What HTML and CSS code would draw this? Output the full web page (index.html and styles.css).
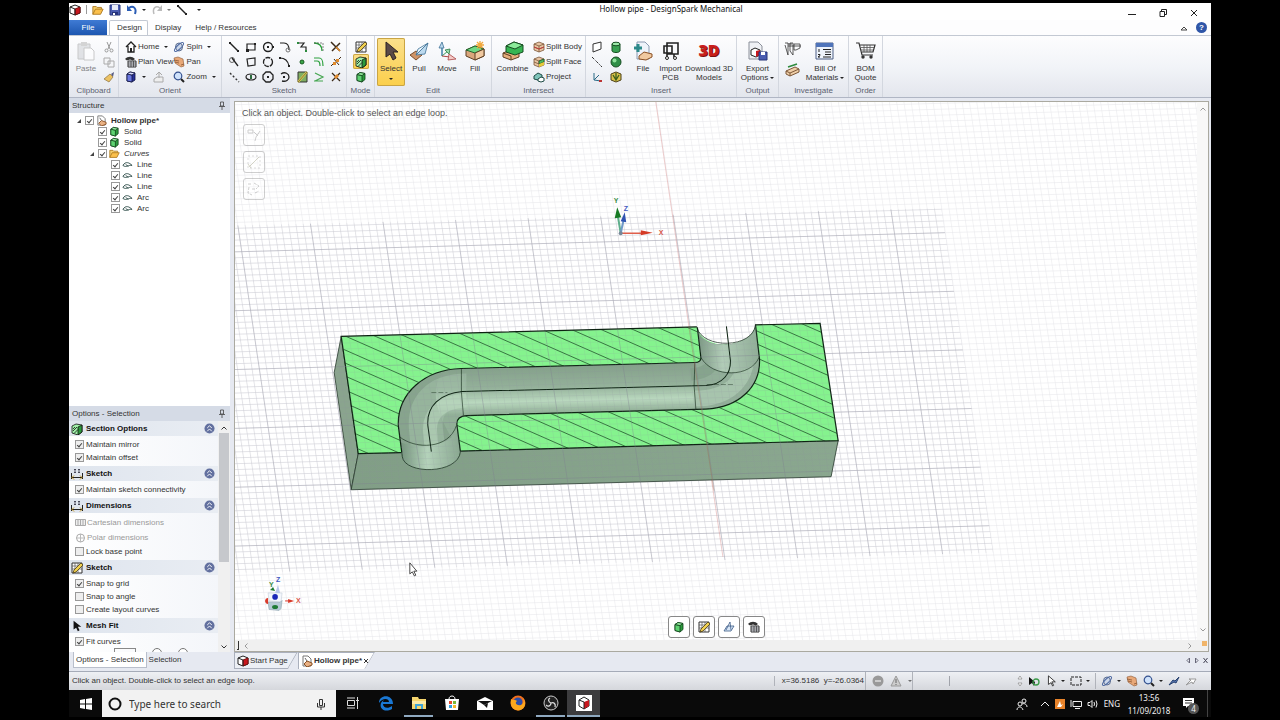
FILE: index.html
```html
<!DOCTYPE html>
<html lang="en">
<head>
    <meta charset="UTF-8">
    <meta name="viewport" content="width=device-width, initial-scale=1.0">
    <title>Hollow pipe - DesignSpark Mechanical</title>
    <link rel="stylesheet" href="styles.css">
</head>
<body>

<!-- shared icons -->
<svg class="sprite" aria-hidden="true">
    <symbol id="i-app" viewBox="0 0 12 12"><path d="M1 3l5-2 5 2v6l-5 2-5-2z" fill="#fff" stroke="#222"/><path d="M6 5l5-2v6l-5 2z" fill="#c8161d" stroke="#711"/><path d="M1 3l5 2v6" fill="none" stroke="#222"/></symbol>
    <symbol id="i-cube" viewBox="0 0 12 12"><path d="M2 3.500l3-2 5 1v6l-3 2.500-5-1.500z" fill="#2b9a3c" stroke="#0d3d16" stroke-width=".8"/><path d="M2 3.500l5 1V11l-5-1.500z" fill="#5fd272" stroke="#0d3d16" stroke-width=".8"/><path d="M2 3.500l3-2 5 1-3 2z" fill="#9af0a4" stroke="#0d3d16" stroke-width=".8"/></symbol>
    <symbol id="i-section" viewBox="0 0 12 12"><path d="M1 3l4-2 6 1v7l-4 3-6-2z" fill="#9ff0a8" stroke="#111" stroke-width=".8"/><path d="M7 4l4-2v7l-4 3z" fill="#2b9a3c" stroke="#111" stroke-width=".8"/><path d="M2 8l4-4M3 10.500l4-4M2 6l2-2" stroke="#111" stroke-width=".8" fill="none"/></symbol>
    <symbol id="i-bluecube" viewBox="0 0 12 12"><path d="M2 3l3-2 5 1v7l-3 2-5-1z" fill="#27309a" stroke="#10143f" stroke-width=".8"/><path d="M2 3l5 1v7l-5-1z" fill="#6a78e0" stroke="#10143f" stroke-width=".8"/><path d="M2 3l3-2 5 1-3 2z" fill="#d4d9fa" stroke="#10143f" stroke-width=".8"/></symbol>
    <symbol id="i-doc" viewBox="0 0 12 12"><path d="M2 1h5l3 3v7H2z" fill="#fff" stroke="#777"/><path d="M3 9l3-3 5 2v2l-5 2z" fill="#e9b184" stroke="#8a5024"/><path d="M4 3l2 3" stroke="#666"/></symbol>
    <symbol id="i-folder" viewBox="0 0 14 12"><path d="M1 11V2h4l1 1h5v2" fill="#f6cf6b" stroke="#a8741a"/><path d="M1 11l3-6h9l-3 6z" fill="#fbc04c" stroke="#a8741a"/></symbol>
    <symbol id="i-save" viewBox="0 0 12 12"><path d="M1 1h10v10H1z" fill="#4a5cb0" stroke="#27347a"/><path d="M3 1h6v5H3z" fill="#e6eaf7"/><path d="M3 8h6v3H3z" fill="#27347a"/><path d="M4 9h2v2H4z" fill="#fff"/></symbol>
    <symbol id="i-undo" viewBox="0 0 12 12"><path d="M3 4c4-3 8 0 6 6" fill="none" stroke="#2b5db5" stroke-width="2"/><path d="M1 1v6h5z" fill="#2b5db5"/></symbol>
    <symbol id="i-redo" viewBox="0 0 12 12"><path d="M9 4C5 1 1 4 3 10" fill="none" stroke="#bbb" stroke-width="1.500"/><path d="M11 1v6H6z" fill="#bbb"/></symbol>
    <symbol id="i-line" viewBox="0 0 12 12"><path d="M2 2l8 8" stroke="#222" stroke-width="1.400"/><path d="M1 1h2v2H1zM9 9h2v2H9z" fill="#222"/></symbol>
    <symbol id="i-curve" viewBox="0 0 12 8"><path d="M1 5c3-5 7-3 10 0-4-1-6 3-10 0M4 4l3 2" fill="none" stroke="#2b4a46"/></symbol>
    <symbol id="i-sketch" viewBox="0 0 12 12"><path d="M1 1h10v10H1z" fill="#fff" stroke="#333"/><path d="M1 4h10M1 7h10M4 1v10M7 1v10" stroke="#555" stroke-width=".7"/><path d="M2 11l1-3 7-7 2 2-7 7z" fill="#f0d050" stroke="#4a3b10" stroke-width=".8"/></symbol>
    <symbol id="i-plane" viewBox="0 0 12 12"><path d="M1 10l3-5h7l-3 5z" fill="#d8e6f6" stroke="#3b5b86" stroke-width=".8"/><path d="M3 9l4-8 1 8" fill="none" stroke="#3b5b86" stroke-width=".8"/></symbol>
    <symbol id="i-plan" viewBox="0 0 12 12"><path d="M0 3c3-3 7-3 10 0l-2 1.500-3-1-3 1z" fill="#333"/><path d="M3 5h8v6H3z" fill="#e6eaf2" stroke="#333"/><path d="M3 7h8M3 9h8M6 5v6M8.500 5v6" stroke="#333" stroke-width=".7"/></symbol>
    <symbol id="i-spin" viewBox="0 0 12 12"><ellipse cx="6" cy="6" rx="3.500" ry="4" fill="#cdd8ea" stroke="#5a6b8c"/><ellipse cx="6" cy="6" rx="6" ry="2" transform="rotate(-45 6 6)" fill="none" stroke="#4a66a0"/></symbol>
    <symbol id="i-pan" viewBox="0 0 12 12"><path d="M1 2l4-1 5 2 1 7-3 1-6-4z" fill="#e8a878" stroke="#8c5630" stroke-width=".6"/><path d="M1 4l5 1M2 6l4 1M8 9l3-1" stroke="#6d3c1c" stroke-width=".6"/></symbol>
    <symbol id="i-zoom" viewBox="0 0 12 12"><circle cx="5" cy="5" r="3.800" fill="#cfe2fb" stroke="#33508e" stroke-width="1.200"/><path d="M8 8l3 3" stroke="#222" stroke-width="2"/></symbol>
    <symbol id="i-dims" viewBox="0 0 12 12"><path d="M.5 5v6M11.500 5v6M1 9.500h10" stroke="#222"/><path d="M3 7.500L1 9.500l2 2M9 7.500l2 2-2 2" fill="none" stroke="#c09018"/><path d="M3 1.500h2M4 1v4M3 4.500h2M7 1.500h2M8 1v4M7 4.500h2" stroke="#334" stroke-width=".8"/></symbol>
    <symbol id="i-arrow" viewBox="0 0 12 14"><path d="M2 1v10l3-2 2 4 2-1-2-4h4z" fill="#111"/></symbol>
    <symbol id="i-pin" viewBox="0 0 8 10"><path d="M2.500 1h3v4h-3zM1 5.500h6M4 6v3" fill="none" stroke="#444" stroke-width=".8"/></symbol>
    <symbol id="i-up" viewBox="0 0 12 12"><circle cx="6" cy="6" r="5.500" fill="#62709f"/><path d="M3.500 5.500L6 3l2.500 2.500M3.500 9L6 6.500 8.500 9" fill="none" stroke="#fff"/></symbol>
    <symbol id="i-chev" viewBox="0 0 8 8"><path d="M1.500 5.500L4 3l2.500 2.500" fill="none" stroke="currentColor"/></symbol>
    <symbol id="i-hatch" viewBox="0 0 12 12"><path d="M6 1l5 2v6l-5 2-5-2V3z" fill="#e8c5a4" stroke="#7b5738" stroke-width=".8"/><path d="M1 3l5 2 5-2M6 5v6M1 6l5 2 5-2" fill="none" stroke="#7b5738" stroke-width=".8"/></symbol>
</svg>

<main class="app">

    <!-- title bar -->
    <header class="titlebar">
        <div class="quick">
            <svg class="ic"><use href="#i-app"/></svg>
            <span class="quick-sep"></span>
            <button aria-label="Open"><svg class="ic"><use href="#i-folder"/></svg></button>
            <button aria-label="Save"><svg class="ic"><use href="#i-save"/></svg></button>
            <button aria-label="Undo"><svg class="ic"><use href="#i-undo"/></svg><i class="caret"></i></button>
            <button aria-label="Redo"><svg class="ic"><use href="#i-redo"/></svg><i class="caret dim"></i></button>
            <button aria-label="Line"><svg class="ic"><use href="#i-line"/></svg></button>
            <button aria-label="Customize"><i class="caret top-line"></i></button>
        </div>
        <h1 class="title">Hollow pipe - DesignSpark Mechanical</h1>
        <div class="window-buttons">
            <button aria-label="Minimize"><svg width="8" height="8"><path d="M0 5.500h8" stroke="#222"/></svg></button>
            <button aria-label="Restore"><svg width="8" height="8"><path d="M1 2.500h4.500v5H1zM2.500 2V.5H7.500v5H6" fill="none" stroke="#222"/></svg></button>
            <button aria-label="Close"><svg width="8" height="8"><path d="M1 1l6 6M7 1L1 7" stroke="#222"/></svg></button>
        </div>
    </header>

    <nav class="tabs">
        <button class="tab file">File</button>
        <button class="tab active">Design</button>
        <button class="tab">Display</button>
        <button class="tab">Help / Resources</button>
        <div class="tabs-right">
            <svg width="8" height="6"><path d="M1 5l3-3 3 3z" fill="#fff" stroke="#444"/></svg>
            <button class="help" aria-label="Help">?</button>
        </div>
    </nav>

    <!-- ribbon -->
    <section class="ribbon">
        <div class="group g-clipboard">
            <div class="group-body">
                <button class="big dim"><svg width="20" height="20" viewBox="0 0 20 20"><path d="M2 3h12v15H2z" fill="#d2d4d8" stroke="#aaa"/><path d="M5 1h6v4H5z" fill="#bbb"/><path d="M8 7h7l3 3v9H8z" fill="#fff" stroke="#aaa"/></svg>Paste</button>
                <div class="rows">
                    <button aria-label="Cut"><svg class="ic" viewBox="0 0 12 12"><path d="M4 1l3 7M8 1L5 8" stroke="#999"/><circle cx="3.500" cy="9.500" r="1.500" fill="none" stroke="#999"/><circle cx="8.500" cy="9.500" r="1.500" fill="none" stroke="#999"/></svg></button>
                    <button aria-label="Copy"><svg class="ic" viewBox="0 0 12 12"><path d="M1 2h6v6H1zM5 5h6v6H5z" fill="#f4f5f7" stroke="#aaa"/></svg></button>
                    <button aria-label="Format"><svg class="ic" viewBox="0 0 12 12"><path d="M8 3l3-2-1 5z" fill="#555a80"/><path d="M1 8l6-5 3 3-4 5z" fill="#ecc263" stroke="#8b7140" stroke-width=".7"/></svg></button>
                </div>
            </div>
            <div class="group-name">Clipboard</div>
        </div>

        <div class="group g-orient">
            <div class="group-body">
                <div class="rows">
                    <button><svg class="ic" viewBox="0 0 12 12"><path d="M1 6l5-5 5 5M3 5v6h6V5" fill="#fff" stroke="#222" stroke-width="1.300"/><path d="M5 7h2v4H5z" fill="#222"/></svg>Home<i class="caret"></i></button>
                    <button><svg class="ic"><use href="#i-plan"/></svg>Plan View</button>
                    <button aria-label="View"><svg class="ic"><use href="#i-bluecube"/></svg><i class="caret"></i><svg class="ic gap" viewBox="0 0 12 12"><path d="M2 11h9V6H5L2 8zM4 4l3-3 3 3M7 2v5" fill="#eee" stroke="#aaa"/></svg></button>
                </div>
                <div class="rows">
                    <button><svg class="ic"><use href="#i-spin"/></svg>Spin<i class="caret"></i></button>
                    <button><svg class="ic"><use href="#i-pan"/></svg>Pan</button>
                    <button><svg class="ic"><use href="#i-zoom"/></svg>Zoom<i class="caret"></i></button>
                </div>
            </div>
            <div class="group-name">Orient</div>
        </div>

        <div class="group g-sketch">
            <div class="group-body tools">
                <button aria-label="Line"><svg class="ic"><use href="#i-line"/></svg></button>
                <button aria-label="Rectangle"><svg class="ic" viewBox="0 0 12 12"><path d="M2 3h8v6H2z" fill="none" stroke="#222" stroke-width="1.200"/><path d="M1 8h3v3H1zM9 2h2v2H9z" fill="#222"/></svg></button>
                <button aria-label="Circle"><svg class="ic" viewBox="0 0 12 12"><circle cx="6" cy="6" r="4.500" fill="none" stroke="#222" stroke-width="1.300"/><path d="M5 5h2v2H5zM10 5h2v2h-2z" fill="#222"/></svg></button>
                <button aria-label="Tangent arc"><svg class="ic" viewBox="0 0 12 12"><path d="M1 2h4c4 0 5 3 5 7" fill="none" stroke="#222" stroke-width="1.200"/><circle cx="9" cy="9" r="2" fill="none" stroke="#777"/></svg></button>
                <button aria-label="Spline"><svg class="ic" viewBox="0 0 12 12"><path d="M2 2h6L5 6h5v4" fill="none" stroke="#222" stroke-width="1.200"/><path d="M1 1h2v2H1zM9 9h2v2H9z" fill="#2b8a3c"/></svg></button>
                <button aria-label="Rounded corner"><svg class="ic" viewBox="0 0 12 12"><path d="M1 2c6 0 8 3 8 8" fill="none" stroke="#2ba03c" stroke-width="1.300"/><path d="M1 2h9v8" fill="none" stroke="#555" stroke-dasharray="2 1" stroke-width=".7"/></svg></button>
                <button aria-label="Trim"><svg class="ic" viewBox="0 0 12 12"><path d="M1 1l9 9M10 2L2 10" stroke="#3b2a18" stroke-width="1.500"/><path d="M6 6l4 4" stroke="#e08a2c" stroke-width="1.500"/></svg></button>

                <button aria-label="Tangent line"><svg class="ic" viewBox="0 0 12 12"><circle cx="4" cy="4" r="2.500" fill="none" stroke="#666"/><path d="M4 2l6 8" stroke="#222" stroke-width="1.300"/></svg></button>
                <button aria-label="Three point rectangle"><svg class="ic" viewBox="0 0 12 12"><path d="M2 3l8-1v7l-7 1z" fill="none" stroke="#222" stroke-width="1.200"/></svg></button>
                <button aria-label="Three point circle"><svg class="ic" viewBox="0 0 12 12"><circle cx="6" cy="6" r="4.500" fill="none" stroke="#222" stroke-width="1.300" stroke-dasharray="5 1"/></svg></button>
                <button aria-label="Three point arc"><svg class="ic" viewBox="0 0 12 12"><path d="M1 2c5 0 8 3 9 8" fill="none" stroke="#222" stroke-width="1.200"/><path d="M0 1h2v2H0zM9 9h2v2H9z" fill="#222"/></svg></button>
                <button aria-label="Point"><svg class="ic" viewBox="0 0 12 12"><circle cx="6" cy="6" r="2" fill="#3aa648" stroke="#17591f"/></svg></button>
                <button aria-label="Offset curve"><svg class="ic" viewBox="0 0 12 12"><path d="M1 2h5c3 0 4 2 4 8M1 5h3c2 0 3 1 3 5" fill="none" stroke="#2ba03c" stroke-width="1.200"/></svg></button>
                <button aria-label="Split curve"><svg class="ic" viewBox="0 0 12 12"><path d="M1 10l4-4M7 5l4-4M4 3l5 6" stroke="#3b2a18"/><path d="M3 6h3v3H3zM6 3h3v3H6z" fill="#e08a2c"/></svg></button>

                <button aria-label="Construction line"><svg class="ic" viewBox="0 0 12 12"><path d="M2 2l9 9" stroke="#333" stroke-width="1.400" stroke-dasharray="2 2"/></svg></button>
                <button aria-label="Ellipse"><svg class="ic" viewBox="0 0 12 12"><ellipse cx="6" cy="6" rx="5" ry="3" fill="none" stroke="#222" stroke-width="1.200"/><path d="M5 4h2v4H5z" fill="#2b6a3c"/></svg></button>
                <button aria-label="Polygon"><svg class="ic" viewBox="0 0 12 12"><path d="M4 1h4l3 3v4l-3 3H4L1 8V4z" fill="none" stroke="#222" stroke-width="1.300"/><path d="M5 5h2v2H5z" fill="#222"/></svg></button>
                <button aria-label="Sweep arc"><svg class="ic" viewBox="0 0 12 12"><path d="M2 3c4-3 8 0 8 3s-3 5-7 4" fill="none" stroke="#222" stroke-width="1.300"/><path d="M4 5h2v2H4z" fill="#222"/></svg></button>
                <button aria-label="Project to sketch"><svg class="ic" viewBox="0 0 12 12"><path d="M2 1h9v10H2z" fill="#7fae63" stroke="#333"/><path d="M2 11L11 1" stroke="#e9cf4c" stroke-width="2"/><path d="M2 11L11 1" stroke="#333" stroke-width=".6"/></svg></button>
                <button aria-label="Bend"><svg class="ic" viewBox="0 0 12 12"><path d="M2 2l8 4-8 4M1 10h9" fill="none" stroke="#45a650" stroke-width="1.200"/></svg></button>
                <button aria-label="Scale"><svg class="ic" viewBox="0 0 12 12"><path d="M2 2l8 8M10 2L2 10" stroke="#3b2a18" stroke-width="1.200"/><path d="M4 6l3-3 2 2-3 3z" fill="#e08a2c"/></svg></button>
            </div>
            <div class="group-name">Sketch</div>
        </div>

        <div class="group g-mode">
            <div class="group-body">
                <div class="rows">
                    <button aria-label="Sketch mode"><svg class="ic"><use href="#i-sketch"/></svg></button>
                    <button class="on" aria-label="Section mode"><svg class="ic"><use href="#i-section"/></svg></button>
                    <button aria-label="3D mode"><svg class="ic"><use href="#i-cube"/></svg></button>
                </div>
            </div>
            <div class="group-name">Mode</div>
        </div>

        <div class="group g-edit">
            <div class="group-body">
                <button class="big on"><svg width="20" height="20" viewBox="0 0 20 20"><path d="M5 1v15l4-3 3 6 3-2-3-6h5z" fill="#5a4a48" stroke="#2c2322"/></svg>Select<i class="caret"></i></button>
                <button class="big"><svg width="20" height="20" viewBox="0 0 20 20"><path d="M1 14l6-4 6 4-6 5z" fill="#cf9468" stroke="#7a4d2a"/><path d="M7 14L19 2l-3 11z" fill="#bcd9ee" stroke="#3f7196" stroke-width=".8"/><path d="M7 14L19 2 9 8z" fill="#e8f4fc" stroke="#3f7196" stroke-width=".8"/></svg>Pull</button>
                <button class="big"><svg width="20" height="20" viewBox="0 0 20 20"><path d="M5 15V4" stroke="#3f80a8" stroke-width="1.500"/><path d="M2 7l3-6 2 6z" fill="#bcd9ee" stroke="#3f7196" stroke-width=".8"/><path d="M5 15l6-5" stroke="#3a9a58"/><path d="M8 9l5-1-1 5z" fill="#9adcae" stroke="#2c7a44" stroke-width=".8"/><path d="M5 15l8 1" stroke="#a44"/><path d="M12 13l7 5-8 1z" fill="#f3c9c6" stroke="#a44" stroke-width=".8"/></svg>Move</button>
                <button class="big"><svg width="20" height="20" viewBox="0 0 20 20"><path d="M1 9l9-4 9 3v7l-9 4-9-4z" fill="#d9a67c" stroke="#5f4024"/><path d="M1 9l9-4 9 3-9 4z" fill="#6fd883" stroke="#22662f"/><path d="M10 12v7l9-4V8z" fill="#f0c9a0" stroke="#5f4024"/><path d="M15 0v8M11 4h8M12 1l6 6M18 1l-6 6" stroke="#f2a83c" stroke-width="1.300"/></svg>Fill</button>
            </div>
            <div class="group-name">Edit</div>
        </div>

        <div class="group g-intersect">
            <div class="group-body">
                <button class="big"><svg width="22" height="20" viewBox="0 0 22 20"><path d="M1 12l8-3 8 3v4l-8 3-8-3z" fill="#e6ae7c" stroke="#5f4024"/><path d="M1 12l8 3v4" fill="none" stroke="#5f4024"/><path d="M4 5l8-4 9 3v7l-8 3-9-3z" fill="#36b552" stroke="#174d22"/><path d="M4 5l8-4 9 3-8 4z" fill="#8beb9a" stroke="#174d22"/></svg>Combine</button>
                <div class="rows">
                    <button><svg class="ic" viewBox="0 0 12 12"><use href="#i-hatch"/><path d="M1 6l5 2 5-2" fill="none" stroke="#c03a3a"/></svg>Split Body</button>
                    <button><svg class="ic" viewBox="0 0 12 12"><use href="#i-hatch"/><path d="M6 5l5-2v3l-5 2z" fill="#4cb860" stroke="#134a1e" stroke-width=".7"/><path d="M6 8l5-2v3l-5 2z" fill="#e6cc38"/></svg>Split Face</button>
                    <button><svg class="ic" viewBox="0 0 12 12"><path d="M1 5l4-3 4 2v3L5 9 1 8z" fill="#7fc4ba" stroke="#1d4a44"/><path d="M5 8l3-2 3 1v3l-3 1-3-1z" fill="#fff" stroke="#1d4a44"/></svg>Project</button>
                </div>
            </div>
            <div class="group-name">Intersect</div>
        </div>

        <div class="group g-insert">
            <div class="group-body">
                <div class="rows">
                    <button aria-label="Plane"><svg class="ic" viewBox="0 0 12 12"><path d="M2 3l8-2v7l-8 3z" fill="#fff" stroke="#333"/></svg></button>
                    <button aria-label="Axis"><svg class="ic" viewBox="0 0 12 12"><path d="M1 1l10 10" stroke="#333" stroke-dasharray="3 1 1 1"/></svg></button>
                    <button aria-label="Origin"><svg class="ic" viewBox="0 0 12 12"><path d="M3 2v7l5-5M3 9l7 1" fill="none" stroke="#2a6a86"/><path d="M8 9h3v2H8z" fill="#b33"/></svg></button>
                </div>
                <div class="rows">
                    <button aria-label="Cylinder"><svg class="ic" viewBox="0 0 12 12"><path d="M2 3v7c1 2 7 2 8 0V3z" fill="#39a152" stroke="#174d22"/><ellipse cx="6" cy="3" rx="4" ry="1.800" fill="#9be8a8" stroke="#174d22"/></svg></button>
                    <button aria-label="Sphere"><svg class="ic" viewBox="0 0 12 12"><circle cx="6" cy="6" r="5" fill="#2f8f48" stroke="#174d22"/><circle cx="4.500" cy="4.500" r="2" fill="#8fe09c"/></svg></button>
                    <button aria-label="Shell"><svg class="ic" viewBox="0 0 12 12"><path d="M6 1l5 2v6l-5 2-5-2V3z" fill="#d9c14a" stroke="#4c4016"/><path d="M3 4l3 5 3-5M6 2v7" fill="none" stroke="#3b5f1c" stroke-width="1.300"/></svg></button>
                </div>
                <button class="big w-file"><svg width="20" height="20" viewBox="0 0 20 20"><path d="M4 1h8l4 4v13H4z" fill="#eef3fa" stroke="#8a99b0"/><path d="M5 3v8M1 7h8" stroke="#2c8a8a" stroke-width="3"/><path d="M6 15l5-4 8 2v3l-6 3-7-1z" fill="#f0c9a0" stroke="#8a5024"/></svg>File</button>
                <button class="big w-pcb"><svg width="20" height="20" viewBox="0 0 20 20"><path d="M6 2h11v11H6zM3 5h8v7H3zM6 12v4M13 13v3" fill="none" stroke="#222" stroke-width="1.600"/><circle cx="6" cy="17" r="1.500" fill="#fff" stroke="#222"/><circle cx="14" cy="17" r="1.500" fill="#fff" stroke="#222"/></svg>Import<br>PCB</button>
                <button class="big w-models"><span class="three-d">3D</span>Download 3D<br>Models</button>
            </div>
            <div class="group-name">Insert</div>
        </div>

        <div class="group g-output">
            <div class="group-body">
                <button class="big"><svg width="20" height="20" viewBox="0 0 20 20"><path d="M1 1h9l4 4v13H1z" fill="#eef0f4" stroke="#8a8f99"/><path d="M3 9l4-2 5 2v5l-4 2-5-2z" fill="#fff" stroke="#222"/><path d="M8 10l4-1v5l-4 2z" fill="#c8161d"/><path d="M11 11h8v8h-8z" fill="#4a5cb0" stroke="#27347a"/><path d="M13 11h4v3h-4z" fill="#fff"/></svg>Export<br><span>Options<i class="caret"></i></span></button>
            </div>
            <div class="group-name">Output</div>
        </div>

        <div class="group g-investigate">
            <div class="group-body">
                <div class="pair">
                    <button aria-label="Measure"><svg width="18" height="16" viewBox="0 0 18 16"><path d="M1 1h3v12L1 3M6 1h3v12L6 9zM4 4h13M10 2h6v4l-4 2h-2zM4 2h4" fill="none" stroke="#333" stroke-width=".8"/></svg></button>
                    <button aria-label="Mass"><svg width="16" height="14" viewBox="0 0 16 14"><path d="M2 8l9-4 4 2v3l-9 4-4-2z" fill="#f0cfa8" stroke="#7b5738"/><path d="M2 8l4 2 9-4M6 10v3" fill="none" stroke="#7b5738"/><path d="M4 4l9-3" stroke="#2b8a3c" stroke-width="1.500"/></svg></button>
                </div>
                <button class="big"><svg width="20" height="20" viewBox="0 0 20 20"><path d="M1 2h17v16H1z" fill="#eef3fa" stroke="#4c5f86"/><path d="M1 2h17v4H1z" fill="#4f74ba"/><path d="M8 8.500h8M10 11h6M10 13.500h6M8 16h8M4 8v3M3 13.500h2v1L3 16h2" fill="none" stroke="#222"/></svg>Bill Of<br><span>Materials<i class="caret"></i></span></button>
            </div>
            <div class="group-name">Investigate</div>
        </div>

        <div class="group g-order">
            <div class="group-body">
                <button class="big"><svg width="20" height="20" viewBox="0 0 20 20"><path d="M0 2h3l3 12h11M4 4h15l-2 7H6" fill="none" stroke="#333" stroke-width="1.200"/><path d="M5 6.500h13M5 9h12M8 4v7M11 4v7M14 4v7" stroke="#555" stroke-width=".8"/><circle cx="7" cy="16" r="1.700" fill="#333"/><circle cx="15" cy="16" r="1.700" fill="#333"/></svg>BOM<br>Quote</button>
            </div>
            <div class="group-name">Order</div>
        </div>
    </section>

    <div class="workspace">

        <!-- left side -->
        <aside class="side">
            <h2 class="panel-title">Structure<svg width="8" height="10"><use href="#i-pin"/></svg></h2>
            <ul class="tree">
                <li><label class="lv1"><i class="twisty"></i><input type="checkbox" checked><svg class="ic"><use href="#i-doc"/></svg><b>Hollow pipe*</b></label></li>
                <li><label class="lv2"><input type="checkbox" checked><svg class="ic"><use href="#i-cube"/></svg>Solid</label></li>
                <li><label class="lv2"><input type="checkbox" checked><svg class="ic"><use href="#i-cube"/></svg>Solid</label></li>
                <li><label class="lv2 parent"><i class="twisty"></i><input type="checkbox" checked><svg class="ic"><use href="#i-folder"/></svg><em>Curves</em></label></li>
                <li><label class="lv3"><input type="checkbox" checked><svg class="ic"><use href="#i-curve"/></svg>Line</label></li>
                <li><label class="lv3"><input type="checkbox" checked><svg class="ic"><use href="#i-curve"/></svg>Line</label></li>
                <li><label class="lv3"><input type="checkbox" checked><svg class="ic"><use href="#i-curve"/></svg>Line</label></li>
                <li><label class="lv3"><input type="checkbox" checked><svg class="ic"><use href="#i-curve"/></svg>Arc</label></li>
                <li><label class="lv3"><input type="checkbox" checked><svg class="ic"><use href="#i-curve"/></svg>Arc</label></li>
            </ul>

            <h2 class="panel-title">Options - Selection<svg width="8" height="10"><use href="#i-pin"/></svg></h2>
            <div class="options">
                <div class="options-list">
                    <h3><svg class="ic"><use href="#i-section"/></svg>Section Options<svg class="fold"><use href="#i-up"/></svg></h3>
                    <div class="opts">
                        <label><input type="checkbox" checked>Maintain mirror</label>
                        <label><input type="checkbox" checked>Maintain offset</label>
                    </div>
                    <h3><svg class="ic"><use href="#i-dims"/></svg>Sketch<svg class="fold"><use href="#i-up"/></svg></h3>
                    <div class="opts">
                        <label><input type="checkbox" checked>Maintain sketch connectivity</label>
                    </div>
                    <h3><svg class="ic"><use href="#i-dims"/></svg>Dimensions<svg class="fold"><use href="#i-up"/></svg></h3>
                    <div class="opts">
                        <button disabled><svg width="11" height="8"><path d="M.5.5h10v6H.5zM3 1v5M5.500 1v5M8 1v5" fill="#eee" stroke="#aaa"/></svg>Cartesian dimensions</button>
                        <button disabled><svg width="11" height="10"><circle cx="5.500" cy="5" r="4" fill="#fff" stroke="#aaa"/><path d="M1.500 5h8M5.500 1v8" stroke="#bbb"/></svg>Polar dimensions</button>
                        <label><input type="checkbox">Lock base point</label>
                    </div>
                    <h3><svg class="ic"><use href="#i-sketch"/></svg>Sketch<svg class="fold"><use href="#i-up"/></svg></h3>
                    <div class="opts">
                        <label><input type="checkbox" checked>Snap to grid</label>
                        <label><input type="checkbox">Snap to angle</label>
                        <label><input type="checkbox">Create layout curves</label>
                    </div>
                    <h3><svg class="ic"><use href="#i-arrow"/></svg>Mesh Fit<svg class="fold"><use href="#i-up"/></svg></h3>
                    <div class="opts">
                        <label><input type="checkbox" checked>Fit curves</label>
                        <div class="fit-row"><input type="text" aria-label="Tolerance"><input type="radio" name="fit" aria-label="Coarse"><input type="radio" name="fit" aria-label="Fine"></div>
                    </div>
                </div>
                <div class="scroll">
                    <svg width="8" height="8"><use href="#i-chev"/></svg>
                    <span class="thumb"></span>
                    <svg class="down" width="8" height="8"><use href="#i-chev"/></svg>
                </div>
            </div>
            <div class="side-tabs">
                <button class="active">Options - Selection</button>
                <button>Selection</button>
            </div>
        </aside>

        <!-- model view -->
        <section class="content">
            <div class="view">
                <div class="canvas">
                    <svg class="scene" viewBox="235 102 963 537" preserveAspectRatio="xMinYMin slice">
                        <defs>
                            <pattern id="fine" width="7.240" height="5.850" patternUnits="userSpaceOnUse" patternTransform="matrix(1 -.027 .15 1 386 247)"><path d="M0 .5h7.240M.5 0v5.850" stroke="#8a8a9c" stroke-width=".5" fill="none"/></pattern>
                            <pattern id="major" width="72.400" height="58.500" patternUnits="userSpaceOnUse" patternTransform="matrix(1 -.027 .15 1 386 247)"><path d="M0 .5h72.400M.5 0v58.500" stroke="#777788" stroke-width=".7" fill="none"/></pattern>
                            <linearGradient id="tube" gradientUnits="userSpaceOnUse" x1="560" y1="365" x2="561" y2="412">
                                <stop offset="0" stop-color="#84a08a"/>
                                <stop offset=".45" stop-color="#94b19a"/>
                                <stop offset=".75" stop-color="#b9d8be"/>
                                <stop offset="1" stop-color="#91af97"/>
                            </linearGradient>
                            <linearGradient id="front" x1="0" y1="0" x2="1" y2="0">
                                <stop offset="0" stop-color="#819e86"/>
                                <stop offset="1" stop-color="#8aa78f"/>
                            </linearGradient>
                            <linearGradient id="legL" gradientUnits="userSpaceOnUse" x1="398" y1="0" x2="462" y2="0">
                                <stop offset="0" stop-color="#6f8e77"/>
                                <stop offset=".45" stop-color="#b4d2ba"/>
                                <stop offset="1" stop-color="#87a58e"/>
                            </linearGradient>
                            <linearGradient id="legR" gradientUnits="userSpaceOnUse" x1="697" y1="0" x2="759" y2="0">
                                <stop offset="0" stop-color="#7b9783"/>
                                <stop offset=".4" stop-color="#b1ccb7"/>
                                <stop offset="1" stop-color="#8fac96"/>
                            </linearGradient>
                            <clipPath id="face"><path d="M341 336L696 326.500C702 352 752 348 754.500 324.500L819 323L837 440L358 453z"/></clipPath>
                            <clipPath id="channel"><path d="M461 368C425 369 397 392 398 425L402 456C404 474 458 474 460 451L456.500 424C456 418 460 415.500 466 415L705 408.500C738 407 760 386 758.500 358L754.500 324C752 348 702 352 696.500 329L700 357C700.500 360 698 362 694 362Z"/></clipPath>
                        </defs>
                        <rect x="0" y="0" width="1400" height="900" fill="#fff"/>
                        <rect x="0" y="0" width="1400" height="900" fill="url(#fine)" opacity=".22"/>
                        <path d="M200 226L940 208L992 552L200 573z" fill="url(#fine)" opacity=".28"/>
                        <path d="M200 226L940 208L992 552L200 573z" fill="url(#major)" opacity=".36"/>
                        <path d="M655 102L722 556" stroke="#d88a8a" stroke-width=".6" opacity=".7"/>

                        <path d="M341 336L334 372L351 489L358 453z" fill="#8aa48e" stroke="#26372a" stroke-width=".8"/>
                        <path d="M358 453L837 440L830 476L351 489z" fill="url(#front)" stroke="#26372a" stroke-width=".8"/>

                        <!-- cut face with section lines -->
                        <g clip-path="url(#face)">
                            <path d="M330 320h520v140H330z" fill="#85f38e"/>
                            <path d="M330 103l520 229M330 116l520 229M330 130l520 229M330 143l520 229M330 156l520 229M330 170l520 229M330 183l520 229M330 196l520 229M330 210l520 229M330 223l520 229M330 236l520 229M330 250l520 229M330 263l520 229M330 276l520 229M330 289l520 229M330 303l520 229M330 316l520 229M330 329l520 229M330 343l520 229M330 356l520 229M330 369l520 229M330 383l520 229M330 396l520 229M330 409l520 229M330 422l520 229M330 436l520 229" fill="none" stroke="#123f1c" stroke-width=".7"/>
                        </g>

                        <!-- pipe channel -->
                        <g clip-path="url(#channel)">
                            <rect x="390" y="320" width="380" height="160" fill="url(#tube)"/>
                            <path d="M390 360H461C430 372 424 400 460 450V480H390z" fill="#87a48d"/>
                            <path d="M431 480L426 432C422 404 438 390 466 390" fill="none" stroke="#a6c4ac" stroke-width="34" opacity=".5"/>
                            <path d="M434 480L430 434C427 412 442 401 466 400" fill="none" stroke="#bddcc2" stroke-width="14" opacity=".5"/>
                            <path d="M390 438C415 450 448 449 462 425V480H390z" fill="url(#legL)"/>
                            <path d="M694 320H770V420H694z" fill="#92af99"/>
                            <path d="M694 398C726 398 746 382 746 350" fill="none" stroke="#b6d2bb" stroke-width="16" opacity=".6"/>
                            <path d="M690 374C712 372 716 362 714 340" fill="none" stroke="#7f9c86" stroke-width="12" opacity=".6"/>
                            <path d="M697 320H770L758 357C750 375 712 378 700 357z" fill="url(#legR)"/>
                        </g>
                        <g fill="none" stroke="#0c2211">
                            <path d="M461 368C425 369 397 392 398 425L401.500 452M460 451L456.500 424C456 418 460 415.500 466 415L705 408.500C738 407 760 386 758.500 358L754.500 324M696.500 327L700 357C700.500 360 698 362 694 362L461 368" stroke-width="1.200"/>
                            <path d="M401.500 452L402 456C404 474 458 474 460 451M696 327C702 349 752 348 754.500 324.500" stroke-width=".7"/>
                            <path d="M401 452L358 453L341 336L696 326.500M460 450.500L837 440L819 323L754.500 324.500" stroke-width="1.200"/>
                            <path d="M431 451L427.500 425C426 405 440 393 462 391L705 385C722 384 730 373 729.500 360L725.500 326" stroke-width="1"/>
                            <path d="M461 368Q460 392 463 415M399 436C415 449 448 449 456 425M694 362Q692 385 695 408.500M700 357C712 378 750 377 758 357" stroke-width=".6"/>
                            <path d="M431 392h16M706 384h28" stroke-width=".4" stroke-dasharray="5 2"/>
                        </g>
                        <path d="M341 336L334 372L351 489L830 476L837 440L819 323L754 324C750 348 702 352 696 327z" fill="url(#fine)" opacity=".25"/>
                        <path d="M341 336L334 372L351 489L830 476L837 440L819 323L754 324C750 348 702 352 696 327z" fill="url(#major)" opacity=".35"/>
                        <path d="M688 326L713 490" stroke="#a06a50" stroke-width=".6" opacity=".6"/>

                        <!-- origin triad -->
                        <g>
                            <path d="M620 233h22" stroke="#e0604c" stroke-width="1.500"/><path d="M640 230l12 2.500-12 2.500z" fill="#d43b26"/>
                            <path d="M620 233l-3-18" stroke="#5fae8c" stroke-width="2"/><path d="M614 218l2.500-11 4 10z" fill="#167a24"/>
                            <path d="M620 233l3-14" stroke="#6f9ac8" stroke-width="2"/><path d="M620 221l4-9 1.500 10z" fill="#2e52b0"/>
                            <circle cx="620" cy="233" r="2" fill="#789"/>
                            <text x="613" y="203" class="axis ax-y">Y</text>
                            <text x="623" y="211" class="axis ax-z">Z</text>
                            <text x="658" y="235" class="axis ax-x">X</text>
                        </g>
                        <!-- view cube -->
                        <g>
                            <path d="M268 592h14l-1 9-12-1z" fill="#f4f7fc" stroke="#c4ccd8" stroke-width=".6"/>
                            <path d="M268 601l12 .5 2-2-1 8-2 2-10-1z" fill="#b6cad4" stroke="#8fa4b0" stroke-width=".6"/>
                            <circle cx="275" cy="596" r="2.800" fill="#1a27b8"/><ellipse cx="275" cy="606" rx="3" ry="2" fill="#1f7a34"/>
                            <path d="M268 597c-4 0-4 6 0 6z" fill="#d93a2a"/>
                            <path d="M275 592l3-8 2 8z" fill="#b9c8ea"/><path d="M270 589l3-3 2 4z" fill="#1f7a34"/>
                            <path d="M285 600h4" stroke="#d93a2a"/><path d="M288 598l6 2-6 2z" fill="#d93a2a"/>
                            <text x="269" y="586" class="axis ax-y">Y</text>
                            <text x="276" y="581" class="axis ax-z">Z</text>
                            <text x="296" y="602" class="axis ax-x">X</text>
                        </g>
                        <!-- mouse cursor -->
                        <path d="M409.500 562v11l2.500-2 2 4 1.500-.7-2-4h3z" fill="#fff" stroke="#222" stroke-width=".8"/>
                    </svg>

                    <div class="hint">
                        <p>Click an object. Double-click to select an edge loop.</p>
                        <button aria-label="Select body"><svg width="16" height="16"><path d="M2 3h5v3H2zM8 5l4 4M14 4l-4 6-1 4" fill="none" stroke="#888"/></svg></button>
                        <button aria-label="Select edge"><svg width="16" height="16"><path d="M2 2h12v12H2z" fill="none" stroke="#aaa" stroke-dasharray="2 2"/><path d="M3 13L13 3M2 10l3 4" stroke="#997"/></svg></button>
                        <button aria-label="Select loop"><svg width="16" height="16"><path d="M2 3h3M8 2l5 3-3 3M3 6l-1 6 4 2M9 12l4-2M6 8h3" fill="none" stroke="#888" stroke-dasharray="3 1"/></svg></button>
                    </div>

                    <div class="mini-bar">
                        <button aria-label="Solid"><svg class="ic"><use href="#i-cube"/></svg></button>
                        <button aria-label="Sketch"><svg class="ic"><use href="#i-sketch"/></svg></button>
                        <button aria-label="Plane"><svg class="ic"><use href="#i-plane"/></svg></button>
                        <button aria-label="Plan view"><svg class="ic"><use href="#i-plan"/></svg></button>
                    </div>
                </div>
                <div class="vscroll">
                    <svg width="8" height="8"><use href="#i-chev"/></svg>
                    <svg class="down" width="8" height="8"><use href="#i-chev"/></svg>
                </div>
                <div class="hscroll">
                    <span class="split"></span>
                    <svg class="left" width="8" height="8"><use href="#i-chev"/></svg>
                    <svg class="right" width="8" height="8"><use href="#i-chev"/></svg>
                </div>
                <div class="corner"></div>
            </div>
            <div class="doc-tabs">
                <button class="doc"><svg class="ic"><use href="#i-app"/></svg>Start Page</button>
                <button class="doc active"><svg class="ic"><use href="#i-doc"/></svg><b>Hollow pipe*</b><svg width="6" height="6"><path d="M1 1l4 4M5 1L1 5" stroke="#333"/></svg></button>
                <div class="doc-nav">
                    <svg width="24" height="8"><path d="M4.500 1v5L2 3.500zM10.500 1v5L13 3.500z" fill="none" stroke="#667"/><path d="M18.500 1l4 5M22.500 1l-4 5" stroke="#445"/></svg>
                </div>
            </div>
        </section>
    </div>

    <!-- status bar -->
    <footer class="status">
        <span>Click an object. Double-click to select an edge loop.</span>
        <div class="status-mid">
            <span class="coords">x=36.5186&nbsp; y=-26.0364</span>
            <div class="status-warn">
                <svg class="ic" viewBox="0 0 12 12"><circle cx="6" cy="6" r="5.500" fill="#999"/><path d="M3 6h6" stroke="#ccc" stroke-width="2"/></svg>
                <svg class="ic" viewBox="0 0 12 12"><path d="M6 1l5 10H1z" fill="#ccc" stroke="#999"/><path d="M6 4v4M6 9v1" stroke="#666"/></svg>
                <i class="caret dim"></i>
            </div>
            <div class="status-gap"></div>
        </div>
        <div class="status-tools">
            <svg width="6" height="12"><path d="M1 4l2-3 2 3zM1 8l2 3 2-3z" fill="#fff" stroke="#888" stroke-width=".7"/></svg>
            <button aria-label="Revert"><svg class="ic" viewBox="0 0 12 12"><path d="M1 2v8l3-2 2 3 1-4z" fill="#111"/><circle cx="8" cy="7" r="3" fill="none" stroke="#3a9a48" stroke-width="1.300"/></svg></button>
            <button aria-label="Pick"><svg class="ic" viewBox="0 0 12 14"><path d="M3 1v10l3-2 2 4 1-1-2-4h4z" fill="#fff" stroke="#222"/></svg><i class="caret"></i></button>
            <button aria-label="Box select"><svg class="ic" viewBox="0 0 12 12"><path d="M1 2h10v8H1z" fill="none" stroke="#222" stroke-dasharray="3 1"/></svg><i class="caret"></i></button>
            <span class="bar"></span>
            <button aria-label="Spin"><svg class="ic"><use href="#i-spin"/></svg><i class="caret"></i></button>
            <button aria-label="Pan"><svg class="ic"><use href="#i-pan"/></svg></button>
            <button aria-label="Zoom"><svg class="ic"><use href="#i-zoom"/></svg><i class="caret"></i></button>
            <button aria-label="Previous view"><svg class="ic" viewBox="0 0 12 12"><path d="M1 10l4-5 2 1 4-4-3 6-2-1z" fill="#5a79b5" stroke="#26406e"/></svg></button>
            <button aria-label="Next view"><svg class="ic" viewBox="0 0 12 12"><path d="M1 10l5-5-2-1h7L8 9 7 7z" fill="#fff" stroke="#999"/></svg></button>
        </div>
    </footer>

    <!-- taskbar -->
    <div class="taskbar">
        <button class="start" aria-label="Start"><svg width="12" height="12"><path d="M0 2l5-1v4.500H0zM6 1l6-1v5.500H6zM0 6.500h5V11l-5-1zM6 6.500h6V12l-6-1z" fill="#fff"/></svg></button>
        <div class="search">
            <svg width="14" height="14"><circle cx="7" cy="7" r="5.500" fill="none" stroke="#111" stroke-width="2"/></svg>
            <input type="text" placeholder="Type here to search" aria-label="Search">
            <svg width="10" height="12"><path d="M3.500 1.500h3v6h-3zM1.500 5v4h7V5M5 9v3" fill="none" stroke="#333"/></svg>
        </div>
        <button class="task" aria-label="Task view"><svg width="12" height="12"><path d="M.5 3.500h7v5h-7zM0 1h8M0 11h8M10.500 0v12M9 3.500h3" fill="none" stroke="#ddd"/></svg></button>
        <button class="task" aria-label="Edge"><svg width="16" height="16"><path d="M1 8C1 -1 15 -1 15 9H5c0 4 5 5 9 2v3C7 18 1 14 3 8c1-2 3-3 3-3-1 1-1 2-1 2h6c0-4-7-4-10 1z" fill="#1a78d4"/></svg></button>
        <button class="task running" aria-label="Explorer"><svg width="16" height="14"><path d="M1 1h6l1 2h7v10H1z" fill="#f6d66e"/><path d="M1 5h14v3H1z" fill="#fbeaa8"/><path d="M4 8h8v5h-2v-3H6v3H4z" fill="#41a5d8"/></svg></button>
        <button class="task" aria-label="Store"><svg width="16" height="16"><path d="M5 4c0-4 6-4 6 0" fill="none" stroke="#fff"/><path d="M1 4h14l-1 11H2z" fill="#fff"/><path d="M5 6h3v3H5z" fill="#e64a2e"/><path d="M9 6h3v3H9z" fill="#7aba3a"/><path d="M5 10h3v3H5z" fill="#2f9fe0"/><path d="M9 10h3v3H9z" fill="#f5b82e"/></svg></button>
        <button class="task" aria-label="Mail"><svg width="18" height="14"><path d="M1 5l8-4 8 4v9H1z" fill="#fff"/><path d="M2 5h14L8 9z" fill="#111"/><path d="M8 9l3 3 1-5z" fill="#111"/></svg></button>
        <button class="task" aria-label="Firefox"><svg width="16" height="16"><circle cx="8" cy="8" r="7.500" fill="#f0701e"/><circle cx="8" cy="7" r="4.500" fill="#2c4ea8"/><path d="M1 4c3 2 4 0 6 2-3 2 0 5 4 4 3-1 3-5 2-7 4 5 2 12-5 12.500C2 15 0 10 1 4z" fill="#fba81c"/></svg></button>
        <button class="task running" aria-label="Recorder"><svg width="16" height="16"><circle cx="8" cy="8" r="7" fill="#222" stroke="#ccc"/><path d="M8 8c-3-1-3-4-1-5M8 8c3-1 5 1 4 4M8 8c0 3-3 4-5 2" fill="none" stroke="#ddd" stroke-width="1.300"/></svg></button>
        <button class="task running current" aria-label="DesignSpark Mechanical"><svg width="16" height="16" viewBox="0 0 16 16"><path d="M0 0h16v16H0z" fill="#fff"/><path d="M3 5l5-3 5 3v6l-5 3-5-3z" fill="#fff" stroke="#222"/><path d="M8 7l5-2v6l-5 3z" fill="#c8161d"/><path d="M3 5l5 2v7" fill="none" stroke="#222"/></svg></button>
        <div class="tray">
            <svg width="12" height="12"><circle cx="4" cy="6" r="2" fill="none" stroke="#eee"/><circle cx="8" cy="3" r="2" fill="none" stroke="#eee"/><path d="M1 12c0-4 5-4 6 0M6 6c2-1 5 0 5 3" fill="none" stroke="#eee"/></svg>
            <svg class="tray-up" width="10" height="8"><path d="M1 6l4-4 4 4" fill="none" stroke="#eee"/></svg>
            <svg width="10" height="10"><path d="M0 0h10v10H0z" fill="#e8832a"/><path d="M2 8l3-6 1 4 2-1-2 3z" fill="#fff"/></svg>
            <svg width="12" height="10"><path d="M3 2.500h8.500v5H3zM5 9.500h5M1 1v7" fill="none" stroke="#eee"/></svg>
            <svg width="12" height="10"><path d="M1 3.500h2l2-2v7l-2-2H1zM7 3q1 2 0 4M9 1.500q2 3.500 0 7" fill="none" stroke="#eee"/></svg>
            <span class="lang">ENG</span>
            <span class="clock">13:56<br>11/09/2018</span>
            <button class="note" aria-label="Notifications"><svg width="16" height="16"><path d="M1 2h11v8H6l-2 2v-2H1z" fill="#fff"/><path d="M3 4.500h7M3 7h7" stroke="#333"/></svg><span>4</span></button>
        </div>
    </div>
</main>

</body>
</html>
```
FILE: styles.css
```css
* {
    margin: 0;
    padding: 0;
    box-sizing: border-box;
}

body {
    display: flex;
    height: 100vh;
    padding: 3px 69px;
    background-color: #000;
    color: #333;
    font-family: "Liberation Sans", Arial, sans-serif;
    font-size: 8px;
    line-height: 10px;
}

button,
input {
    font: inherit;
    color: inherit;
    background: none;
    border: none;
}

svg {
    display: block;
    flex: none;
}

.sprite {
    position: absolute;
    width: 0;
    height: 0;
}

.ic {
    width: 12px;
    height: 12px;
}

.caret {
    display: inline-block;
    flex: none;
    border: 2px solid transparent;
    border-top-color: #222;
    border-bottom: 0;
    margin-left: 4px;
}

.dim {
    opacity: 0.6;
}

.app {
    flex: 1;
    min-width: 0;
    display: flex;
    flex-direction: column;
    background-color: #fff;
}

/* Title bar */
.titlebar {
    display: flex;
    height: 17px;
}

.quick {
    flex: none;
    display: flex;
    align-items: center;
    gap: 5px;
    width: 145px;
    padding-bottom: 4px;
}

.quick button {
    display: flex;
    align-items: center;
}

.quick-sep {
    width: 1px;
    height: 9px;
    background-color: #999;
}

.quick .top-line {
    margin-left: 4px;
    box-shadow: 0 -4px 0 -1px #666;
}

.title {
    flex: 1;
    padding-top: 1px;
    color: #111;
    font-family: "Noto Sans", sans-serif;
    font-size: 8px;
    font-weight: 400;
    text-align: center;
}

.window-buttons {
    display: flex;
    justify-content: flex-end;
    gap: 23px;
    padding: 6px 13px 0 0;
}

.window-buttons button {
    height: 8px;
}

/* Tabs */
.tabs {
    display: flex;
    height: 15px;
    background-color: #fdfdfe;
}

.tab {
    padding: 0 7px;
}

.tab.file {
    width: 38px;
    margin-right: 2px;
    background: linear-gradient(#3f7bd4, #1d56b0);
    color: #fff;
}

.tab.active {
    width: 39px;
    background-color: #fff;
    border: 1px solid #c3c9d3;
    border-bottom: 0;
    border-radius: 2px 2px 0 0;
}

.tabs-right {
    display: flex;
    align-items: center;
    gap: 8px;
    margin-left: auto;
    padding-right: 4px;
}

.help {
    width: 11px;
    height: 11px;
    border-radius: 50%;
    background-color: #2f56a8;
    color: #fff;
    font-weight: 700;
    line-height: 11px;
}

/* Ribbon */
.ribbon {
    display: flex;
    height: 63px;
    border-top: 1px solid #c3c9d3;
    border-bottom: 1px solid #b0b6c4;
    background: linear-gradient(#fdfdfe, #f2f4f8 50%, #e3e6ed);
}

.group {
    display: flex;
    flex-direction: column;
    flex: none;
    border-right: 1px solid #d3d7df;
}

.group-body {
    flex: 1;
    display: flex;
    min-height: 0;
    padding-top: 2px;
}

.group-name {
    flex: none;
    height: 11px;
    color: #5c6270;
    text-align: center;
    white-space: nowrap;
}

.g-clipboard { width: 50px; }
.g-orient { width: 103px; }
.g-sketch { width: 125px; }
.g-mode { width: 28px; }
.g-edit { width: 117px; }
.g-intersect { width: 94px; }
.g-insert { width: 151px; }
.g-output { width: 42px; }
.g-investigate { width: 70px; }
.g-order { width: 34px; }

.big {
    display: flex;
    flex-direction: column;
    align-items: center;
    width: 28px;
    height: 48px;
    padding-top: 3px;
    line-height: 9px;
    white-space: nowrap;
}

.big svg,
.three-d {
    margin-bottom: 3px;
}

.big > .caret {
    margin: 5px 0 0;
}

.big span .caret {
    margin-left: 2px;
    vertical-align: middle;
}

.on {
    background: linear-gradient(#fbe08c, #fbcf4b);
    box-shadow: inset 0 0 0 1px #c9a443;
    border-radius: 2px;
}

.rows {
    padding-top: 1px;
}

.rows button {
    display: flex;
    align-items: center;
    height: 15px;
    white-space: nowrap;
}

.rows .gap {
    margin-left: 5px;
}

.g-clipboard .big {
    width: 34px;
}

.g-orient .group-body {
    padding-left: 6px;
}

.g-orient .rows {
    width: 52px;
}

.g-orient .rows button {
    gap: 1px;
}

.tools {
    display: grid;
    grid-template-columns: repeat(7, 17px);
    grid-auto-rows: 15px;
    padding: 3px 0 0 3px;
}

.tools button {
    display: grid;
    place-items: center;
}

.g-mode .group-body {
    justify-content: center;
}

.g-mode button {
    width: 16px;
    justify-content: center;
}

.g-edit .group-body {
    padding-left: 2px;
}

.g-intersect .big {
    width: 41px;
}

.g-intersect .ic {
    margin-right: 1px;
}

.g-insert .rows {
    width: 19px;
    margin-left: 5px;
}

.g-insert .rows + .rows {
    margin-left: 0;
}

.w-pcb {
    width: 27px;
}

.w-models {
    width: 50px;
}

.three-d {
    height: 20px;
    color: #c8201c;
    font-family: "Open Sans", sans-serif;
    font-size: 16px;
    font-weight: 800;
    line-height: 18px;
    text-shadow: 1px 1px 0 #7c1210;
}

.g-output .big {
    width: 41px;
}

.pair {
    display: grid;
    gap: 5px;
    align-content: start;
    padding: 4px 0 0 5px;
}

.g-investigate .big {
    width: 46px;
}

.g-order .big {
    width: 33px;
}

/* Workspace */
.workspace {
    flex: 1;
    min-height: 0;
    display: flex;
    gap: 4px;
    background-color: #e6e9f1;
}

.side {
    flex: none;
    width: 161px;
    display: flex;
    flex-direction: column;
}

.panel-title {
    display: flex;
    align-items: center;
    justify-content: space-between;
    flex: none;
    height: 15px;
    padding: 1px 4px 0 3px;
    background-color: #d5dbe6;
    font-size: 8px;
    font-weight: 400;
}

.tree {
    flex: 1;
    padding-top: 2px;
    background-color: #fff;
    list-style: none;
}

.tree label {
    display: flex;
    align-items: center;
    height: 11px;
}

.tree .ic {
    width: 11px;
    height: 11px;
    margin: 0 4px 0 2px;
}

.tree .lv1 { padding-left: 8px; }
.tree .lv2 { padding-left: 29px; }
.tree .lv2.parent { padding-left: 21px; }
.tree .lv3 { padding-left: 42px; }

.twisty {
    width: 0;
    height: 0;
    margin-right: 4px;
    border: 2px solid transparent;
    border-right-color: #444;
    border-bottom-color: #444;
}

input[type="checkbox"] {
    appearance: none;
    flex: none;
    display: grid;
    place-items: center;
    width: 9px;
    height: 9px;
    border: 1px solid #999;
    background-color: #fff;
}

input[type="checkbox"]:checked::after {
    content: "";
    width: 2px;
    height: 4px;
    margin-top: -1px;
    border: solid #444;
    border-width: 0 1px 1px 0;
    box-sizing: content-box;
    transform: rotate(40deg);
}

.options {
    flex: none;
    display: flex;
    height: 231px;
    background-color: #fff;
}

.options-list {
    flex: 1;
    overflow: hidden;
}

.options h3 {
    display: flex;
    align-items: center;
    height: 15px;
    padding: 0 3px 0 2px;
    background: linear-gradient(90deg, #dfe5ee, #e9edf3);
    color: #111;
    font-size: 8px;
}

.options h3 .ic {
    margin-right: 3px;
}

.fold {
    width: 11px;
    height: 11px;
    margin-left: auto;
}

.opts {
    padding: 2px 0 2px 6px;
    background: linear-gradient(90deg, #fff, #f4f6fa);
}

.opts label,
.opts button {
    display: flex;
    align-items: center;
    height: 13px;
    gap: 2px;
}

.opts button {
    height: 15px;
    gap: 1px;
    color: #999;
}

.opts input[type="checkbox"] {
    background-color: #eee;
}

.fit-row {
    display: flex;
    gap: 16px;
    padding-left: 39px;
}

.fit-row input[type="text"] {
    width: 22px;
    height: 12px;
    border: 1px solid #888;
}

.fit-row input[type="radio"] {
    width: 10px;
    height: 10px;
}

.scroll {
    display: flex;
    flex-direction: column;
    align-items: center;
    width: 12px;
    padding: 3px 0 1px;
    background-color: #f0f0f0;
}

.thumb {
    flex: 0 0 129px;
    width: 10px;
    margin-top: 1px;
    background-color: #c6c8cc;
}

.down {
    margin-top: auto;
    transform: rotate(180deg);
}

.side-tabs {
    flex: none;
    display: flex;
    height: 19px;
    padding: 0 4px 3px;
}

.side-tabs button {
    padding: 0 2px;
    white-space: nowrap;
}

.side-tabs .active {
    border: 1px solid #b9bfcc;
    border-top: 0;
    background-color: #fff;
}

/* Model view */
.content {
    flex: 1;
    min-width: 0;
    display: flex;
    flex-direction: column;
    padding-top: 3px;
}

.view {
    flex: 1;
    min-height: 0;
    display: grid;
    grid-template-columns: 1fr 11px;
    grid-template-rows: 1fr 11px;
    margin-right: 2px;
    border: 1px solid #aaa9a0;
    background-color: #f0f0f0;
}

.canvas {
    position: relative;
    min-height: 0;
    overflow: hidden;
    background-color: #fff;
}

.scene {
    position: absolute;
    width: 100%;
    height: 100%;
}

.axis {
    font-size: 7px;
    font-weight: 700;
}

.ax-x { fill: #d8574a; }
.ax-y { fill: #3a8c48; }
.ax-z { fill: #4258c0; }

.hint {
    position: absolute;
    top: 5px;
    left: 7px;
}

.hint p {
    margin-bottom: 5px;
    color: #555;
    font-size: 9px;
    line-height: 12px;
}

.hint button,
.mini-bar button {
    display: grid;
    place-items: center;
    width: 22px;
    height: 22px;
    border: 1px solid #888;
    border-radius: 3px;
    background-color: #fff;
}

.hint button {
    margin: 0 0 5px 1px;
    opacity: 0.4;
}

.mini-bar {
    position: absolute;
    bottom: 2px;
    left: 45%;
    display: flex;
    gap: 3px;
}

.vscroll,
.hscroll {
    display: flex;
    align-items: center;
    color: #999;
}

.vscroll {
    flex-direction: column;
    padding: 3px 0 6px;
    background-color: #f8f8f8;
}

.hscroll {
    padding: 0 3px 0 2px;
}

.split {
    width: 2px;
    height: 9px;
    margin-right: 3px;
    border-right: 1px solid #333;
    border-bottom: 1px solid #333;
}

.left {
    transform: rotate(-90deg);
}

.right {
    margin-left: auto;
    transform: rotate(90deg);
}

.corner {
    width: 5px;
    height: 5px;
    margin: 1px 0 0 5px;
    background-color: #f0b469;
}

.doc-tabs {
    display: flex;
    height: 19px;
    padding-bottom: 2px;
}

.doc {
    position: relative;
    display: flex;
    align-items: center;
    gap: 1px;
    width: 64px;
    padding-left: 2px;
    border: 1px solid #aab0bd;
    border-width: 1px 0 1px 1px;
    clip-path: polygon(0 0, 100% 0, calc(100% - 10px) 100%, 0 100%);
    background-color: #eceff5;
    white-space: nowrap;
}

.doc.active {
    width: 77px;
    border-bottom: 0;
    background-color: #fff;
}

/* slanted edge of the tab */
.doc::after {
    content: "";
    position: absolute;
    top: 0;
    right: 5px;
    width: 1px;
    height: 100%;
    background-color: #aab0bd;
    transform: skewX(-30deg);
}

.doc-nav {
    margin-left: auto;
    padding: 5px 2px 0 0;
}

/* Status bar */
.status {
    flex: none;
    display: flex;
    align-items: center;
    height: 19px;
    padding: 0 14px 0 3px;
    border-top: 1px solid #a5abb8;
    background: linear-gradient(#eef0f4, #d5d7dc);
}

.status-mid {
    display: flex;
    align-items: center;
    margin-left: auto;
}

.coords {
    width: 91px;
    padding-right: 1px;
    border-left: 1px solid #b0b3ba;
    text-align: right;
    white-space: nowrap;
}

.status-warn {
    display: flex;
    align-items: center;
    gap: 6px;
    width: 48px;
    height: 18px;
    padding-left: 6px;
    border: solid #b0b3ba;
    border-width: 0 1px;
}

.status-warn .caret {
    margin: 0;
}

.status-gap {
    width: 37px;
    height: 10px;
    border-right: 1px solid #a0a3aa;
}

.status-tools {
    display: flex;
    align-items: center;
    gap: 5px;
    margin-left: 67px;
}

.status-tools button {
    display: flex;
    align-items: center;
}

.bar {
    width: 1px;
    height: 16px;
    background-color: #b0b3ba;
}

/* Taskbar */
.taskbar {
    flex: none;
    display: flex;
    height: 27px;
    background-color: #0a0a0a;
    color: #f2f2f2;
    font-family: "Noto Sans", sans-serif;
}

.start {
    display: grid;
    place-items: center;
    width: 33px;
}

.search {
    display: flex;
    align-items: center;
    width: 234px;
    padding: 0 10px 0 6px;
    background-color: #f2f2f2;
}

.search input {
    flex: 1;
    min-width: 0;
    padding-left: 7px;
    font-size: 10px;
}

.search input::placeholder {
    color: #333;
}

.task {
    display: grid;
    place-items: center;
    width: 33px;
    border-bottom: 2px solid transparent;
}

.task.running {
    width: 29px;
    margin: 0 2px;
    border-bottom-color: #8fa9c0;
}

.task.current {
    width: 33px;
    margin: 0;
    background-color: #3c3c3e;
}

.tray {
    display: flex;
    align-items: center;
    gap: 5px;
    margin-left: auto;
    padding-right: 3px;
}

.tray-up {
    margin-left: 7px;
}

.clock {
    width: 48px;
    text-align: center;
    line-height: 13px;
}

.note {
    position: relative;
    width: 30px;
    height: 27px;
    padding-left: 4px;
    border-right: 1px solid #444;
}

.note span {
    position: absolute;
    right: 8px;
    bottom: 3px;
    width: 11px;
    height: 11px;
    border-radius: 50%;
    background-color: #555;
    line-height: 11px;
}
```
